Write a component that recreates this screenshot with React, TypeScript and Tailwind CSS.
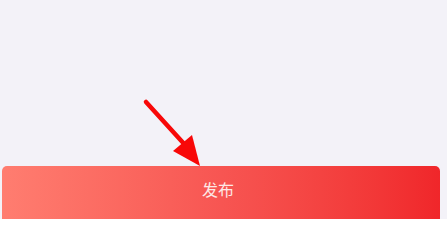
export default function App() {
  return (
    <div className="w-[447px] h-[219px] bg-[#f3f2f8] flex flex-col relative overflow-hidden" style={{ fontFamily: '"Noto Sans CJK SC", "Noto Sans", sans-serif' }}>
      <div className="flex-1" />
      <div className="mx-[2px] mr-[7px] h-[60px] mb-[-7px] rounded-[5px] bg-gradient-to-r from-[#ff7d70] via-[#f75552] to-[#f0262a] flex justify-center pt-[12px] pr-[6px]">
        <span className="text-[16px] leading-[22px] text-[#fde8e6]">发布</span>
      </div>
      <svg className="absolute left-0 top-0" width="447" height="219" viewBox="0 0 447 219">
        <line x1="146" y1="102" x2="186" y2="146" stroke="#f80808" strokeWidth="4.5" strokeLinecap="round" />
        <polygon points="200,166 173,151 192,135" fill="#f80808" />
      </svg>
    </div>
  )
}
